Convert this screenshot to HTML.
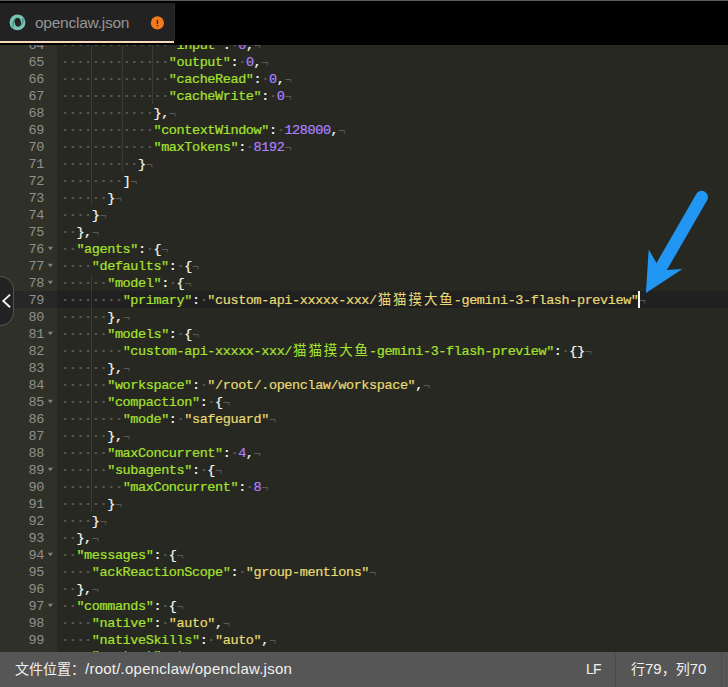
<!DOCTYPE html>
<html lang="zh-CN">
<head>
<meta charset="utf-8">
<title>openclaw.json</title>
<style>
html,body{margin:0;padding:0;}
body{width:728px;height:687px;overflow:hidden;background:#272822;position:relative;font-family:"Liberation Sans","Noto Sans CJK SC",sans-serif;}
#top{position:absolute;left:0;top:0;width:728px;height:45px;background:#000;}
#topline{position:absolute;left:0;top:0;width:728px;height:1px;background:#5c5c5c;}
#tab{position:absolute;left:0;top:3px;width:175px;height:37.6px;background:#222;box-sizing:border-box;border-right:1px solid #2c2c2c;}
#tabline{position:absolute;left:0;top:41px;width:174px;height:2px;background:#fbd9bd;}
#tabicon{position:absolute;left:0;top:0;width:174px;height:38px;}
#tabname{position:absolute;left:35px;top:0.6px;height:38px;line-height:38px;font-size:15.5px;letter-spacing:-0.25px;color:#959595;white-space:nowrap;}

#ed{position:absolute;left:0;top:45px;width:728px;height:607px;overflow:hidden;background:#272822;}
#gutter{position:absolute;left:0;top:0;width:57px;height:607px;background:#2f3129;}
.gc{position:absolute;left:0;width:44px;height:17px;line-height:19px;box-sizing:border-box;text-align:right;color:#8f908a;font-family:"Liberation Mono",monospace;font-size:13.5px;letter-spacing:-0.4px;}
.gc.act{background:#272727;width:57px;box-sizing:border-box;padding-right:13px;}
.ln{position:absolute;left:57px;width:671px;height:17px;line-height:19px;padding-left:4px;box-sizing:border-box;white-space:pre;color:#f8f8f2;font-family:"Liberation Mono","Noto Sans CJK SC",monospace;font-size:13.5px;letter-spacing:-0.4px;}
.ln.act{background:#202020;}
.ln span{display:inline-block;height:17px;vertical-align:top;}
.ln{-webkit-text-stroke:0.2px;}
.i{color:#5a5a54;font-weight:bold;}
.e{color:#5a5a54;font-size:12px;position:relative;top:1.7px;-webkit-text-stroke:0;}
.g{box-shadow:inset -1px 0 0 rgba(255,255,255,0.09);}
.v{color:#a6e22e;}
.s{color:#e6db74;}
.n{color:#ae81ff;}
.b{color:#ae81ff;}
.cjk{width:15.4px;text-align:center;letter-spacing:0;font-size:13.5px;-webkit-text-stroke:0;font-weight:400;}
#cursor{position:absolute;left:638px;top:246px;width:2px;height:17px;background:#f8f8f0;}
#toggle{position:absolute;left:0;top:276px;width:14px;height:50px;background:#222;border:1px solid #50504d;border-left:none;border-radius:0 14px 14px 0;box-sizing:border-box;}
#arrow{position:absolute;left:0;top:0;width:728px;height:687px;pointer-events:none;}
#status{position:absolute;left:0;top:652px;width:728px;height:35px;background:#565656;color:#f0f0f0;font-size:14px;line-height:35px;}
#status .path{position:absolute;left:15px;top:-1.2px;white-space:nowrap;}
#status .la{font-size:15px;letter-spacing:0.24px;}
#status .dg{font-size:15px;}
#status .lf{position:absolute;left:586px;top:-0.5px;letter-spacing:-0.9px;}
#status .pos{position:absolute;left:631px;top:-1.2px;white-space:nowrap;}
#status .sep{position:absolute;top:0;width:1px;height:35px;background:#4c4c4c;}
</style>
</head>
<body>
<div id="top">
  <div id="topline"></div>
  <div id="tab">
    <svg id="tabicon" viewBox="0 0 174 38">
      <circle cx="17.5" cy="19.4" r="7.9" fill="#77c4b7"/>
      <ellipse cx="17.8" cy="19.25" rx="3.1" ry="4.4" transform="rotate(-12 17.8 19.25)" fill="#222"/>
      <path d="M15.6 15.5 Q12 18.9 13.1 23.6" fill="none" stroke="#2a665d" stroke-width="0.9"/>
      <path d="M22.6 15.2 Q24.2 20.6 19.4 23" fill="none" stroke="#2a665d" stroke-width="0.9"/>
      <circle cx="157.4" cy="19.9" r="6.6" fill="#f4791f"/>
      <rect x="156.7" y="16.9" width="1.4" height="4.1" fill="#3a2a1c"/>
      <rect x="156.7" y="22" width="1.4" height="1.3" fill="#3a2a1c"/>
    </svg>
    <div id="tabname">openclaw.json</div>
  </div>
  <div id="tabline"></div>
</div>
<div id="ed">
  <div id="gutter">
<div class="gc" style="top:-9px">64</div>
<div class="gc" style="top:8px">65</div>
<div class="gc" style="top:25px">66</div>
<div class="gc" style="top:42px">67</div>
<div class="gc" style="top:59px">68</div>
<div class="gc" style="top:76px">69</div>
<div class="gc" style="top:93px">70</div>
<div class="gc" style="top:110px">71</div>
<div class="gc" style="top:127px">72</div>
<div class="gc" style="top:144px">73</div>
<div class="gc" style="top:161px">74</div>
<div class="gc" style="top:178px">75</div>
<div class="gc" style="top:195px">76</div>
<div class="gc" style="top:212px">77</div>
<div class="gc" style="top:229px">78</div>
<div class="gc act" style="top:246px">79</div>
<div class="gc" style="top:263px">80</div>
<div class="gc" style="top:280px">81</div>
<div class="gc" style="top:297px">82</div>
<div class="gc" style="top:314px">83</div>
<div class="gc" style="top:331px">84</div>
<div class="gc" style="top:348px">85</div>
<div class="gc" style="top:365px">86</div>
<div class="gc" style="top:382px">87</div>
<div class="gc" style="top:399px">88</div>
<div class="gc" style="top:416px">89</div>
<div class="gc" style="top:433px">90</div>
<div class="gc" style="top:450px">91</div>
<div class="gc" style="top:467px">92</div>
<div class="gc" style="top:484px">93</div>
<div class="gc" style="top:501px">94</div>
<div class="gc" style="top:518px">95</div>
<div class="gc" style="top:535px">96</div>
<div class="gc" style="top:552px">97</div>
<div class="gc" style="top:569px">98</div>
<div class="gc" style="top:586px">99</div>
<div class="gc" style="top:603px">100</div>
  </div>
<div class="ln" style="top:-9px"><span class="i g">····</span><span class="i g">····</span><span class="i g">····</span><span class="i">··</span><span class="v">"input"</span>:<span class="i">·</span><span class="n">0</span>,<span class="e">¬</span></div>
<div class="ln" style="top:8px"><span class="i g">····</span><span class="i g">····</span><span class="i g">····</span><span class="i">··</span><span class="v">"output"</span>:<span class="i">·</span><span class="n">0</span>,<span class="e">¬</span></div>
<div class="ln" style="top:25px"><span class="i g">····</span><span class="i g">····</span><span class="i g">····</span><span class="i">··</span><span class="v">"cacheRead"</span>:<span class="i">·</span><span class="n">0</span>,<span class="e">¬</span></div>
<div class="ln" style="top:42px"><span class="i g">····</span><span class="i g">····</span><span class="i g">····</span><span class="i">··</span><span class="v">"cacheWrite"</span>:<span class="i">·</span><span class="n">0</span><span class="e">¬</span></div>
<div class="ln" style="top:59px"><span class="i g">····</span><span class="i g">····</span><span class="i">····</span>},<span class="e">¬</span></div>
<div class="ln" style="top:76px"><span class="i g">····</span><span class="i g">····</span><span class="i">····</span><span class="v">"contextWindow"</span>:<span class="i">·</span><span class="n">128000</span>,<span class="e">¬</span></div>
<div class="ln" style="top:93px"><span class="i g">····</span><span class="i g">····</span><span class="i">····</span><span class="v">"maxTokens"</span>:<span class="i">·</span><span class="n">8192</span><span class="e">¬</span></div>
<div class="ln" style="top:110px"><span class="i g">····</span><span class="i g">····</span><span class="i">··</span>}<span class="e">¬</span></div>
<div class="ln" style="top:127px"><span class="i g">····</span><span class="i">····</span>]<span class="e">¬</span></div>
<div class="ln" style="top:144px"><span class="i g">····</span><span class="i">··</span>}<span class="e">¬</span></div>
<div class="ln" style="top:161px"><span class="i">····</span>}<span class="e">¬</span></div>
<div class="ln" style="top:178px"><span class="i">··</span>},<span class="e">¬</span></div>
<div class="ln" style="top:195px"><span class="i">··</span><span class="v">"agents"</span>:<span class="i">·</span>{<span class="e">¬</span></div>
<div class="ln" style="top:212px"><span class="i">····</span><span class="v">"defaults"</span>:<span class="i">·</span>{<span class="e">¬</span></div>
<div class="ln" style="top:229px"><span class="i g">····</span><span class="i">··</span><span class="v">"model"</span>:<span class="i">·</span>{<span class="e">¬</span></div>
<div class="ln act" style="top:246px"><span class="i g">····</span><span class="i">····</span><span class="v">"primary"</span>:<span class="i">·</span><span class="s">"custom-api-xxxxx-xxx/<span class="cjk">猫</span><span class="cjk">猫</span><span class="cjk">摸</span><span class="cjk">大</span><span class="cjk">鱼</span>-gemini-3-flash-preview"</span><span class="e">¬</span></div>
<div class="ln" style="top:263px"><span class="i g">····</span><span class="i">··</span>},<span class="e">¬</span></div>
<div class="ln" style="top:280px"><span class="i g">····</span><span class="i">··</span><span class="v">"models"</span>:<span class="i">·</span>{<span class="e">¬</span></div>
<div class="ln" style="top:297px"><span class="i g">····</span><span class="i">····</span><span class="v">"custom-api-xxxxx-xxx/<span class="cjk">猫</span><span class="cjk">猫</span><span class="cjk">摸</span><span class="cjk">大</span><span class="cjk">鱼</span>-gemini-3-flash-preview"</span>:<span class="i">·</span>{}<span class="e">¬</span></div>
<div class="ln" style="top:314px"><span class="i g">····</span><span class="i">··</span>},<span class="e">¬</span></div>
<div class="ln" style="top:331px"><span class="i g">····</span><span class="i">··</span><span class="v">"workspace"</span>:<span class="i">·</span><span class="s">"/root/.openclaw/workspace"</span>,<span class="e">¬</span></div>
<div class="ln" style="top:348px"><span class="i g">····</span><span class="i">··</span><span class="v">"compaction"</span>:<span class="i">·</span>{<span class="e">¬</span></div>
<div class="ln" style="top:365px"><span class="i g">····</span><span class="i">····</span><span class="v">"mode"</span>:<span class="i">·</span><span class="s">"safeguard"</span><span class="e">¬</span></div>
<div class="ln" style="top:382px"><span class="i g">····</span><span class="i">··</span>},<span class="e">¬</span></div>
<div class="ln" style="top:399px"><span class="i g">····</span><span class="i">··</span><span class="v">"maxConcurrent"</span>:<span class="i">·</span><span class="n">4</span>,<span class="e">¬</span></div>
<div class="ln" style="top:416px"><span class="i g">····</span><span class="i">··</span><span class="v">"subagents"</span>:<span class="i">·</span>{<span class="e">¬</span></div>
<div class="ln" style="top:433px"><span class="i g">····</span><span class="i">····</span><span class="v">"maxConcurrent"</span>:<span class="i">·</span><span class="n">8</span><span class="e">¬</span></div>
<div class="ln" style="top:450px"><span class="i g">····</span><span class="i">··</span>}<span class="e">¬</span></div>
<div class="ln" style="top:467px"><span class="i">····</span>}<span class="e">¬</span></div>
<div class="ln" style="top:484px"><span class="i">··</span>},<span class="e">¬</span></div>
<div class="ln" style="top:501px"><span class="i">··</span><span class="v">"messages"</span>:<span class="i">·</span>{<span class="e">¬</span></div>
<div class="ln" style="top:518px"><span class="i">····</span><span class="v">"ackReactionScope"</span>:<span class="i">·</span><span class="s">"group-mentions"</span><span class="e">¬</span></div>
<div class="ln" style="top:535px"><span class="i">··</span>},<span class="e">¬</span></div>
<div class="ln" style="top:552px"><span class="i">··</span><span class="v">"commands"</span>:<span class="i">·</span>{<span class="e">¬</span></div>
<div class="ln" style="top:569px"><span class="i">····</span><span class="v">"native"</span>:<span class="i">·</span><span class="s">"auto"</span>,<span class="e">¬</span></div>
<div class="ln" style="top:586px"><span class="i">····</span><span class="v">"nativeSkills"</span>:<span class="i">·</span><span class="s">"auto"</span>,<span class="e">¬</span></div>
<div class="ln" style="top:602.3px"><span class="i">····</span><span class="v">"restart"</span>:<span class="i">·</span><span class="b">true</span><span class="e">¬</span></div>
  <div id="cursor"></div>
</div>
<div id="toggle"></div>
<svg id="arrow" viewBox="0 0 728 687">
  <g fill="#7e7f79"><polygon points="47.6,246.8 53.2,246.8 50.4,250.3"/><polygon points="47.6,263.8 53.2,263.8 50.4,267.3"/><polygon points="47.6,280.8 53.2,280.8 50.4,284.3"/><polygon points="47.6,331.8 53.2,331.8 50.4,335.3"/><polygon points="47.6,399.8 53.2,399.8 50.4,403.3"/><polygon points="47.6,467.8 53.2,467.8 50.4,471.3"/><polygon points="47.6,552.8 53.2,552.8 50.4,556.3"/><polygon points="47.6,603.8 53.2,603.8 50.4,607.3"/></g>
  <polyline points="10.1,294.6 3.3,300.9 10.1,307.2" fill="none" stroke="#f4f4f4" stroke-width="1.9"/>
  <line x1="701.7" y1="197.1" x2="662" y2="266" stroke="#2196f3" stroke-width="12.5" stroke-linecap="round"/>
  <polygon points="645.9,292.9 648.7,249.5 656.8,263.6 666.4,270 682.5,268.9" fill="#2196f3"/>
</svg>
<div id="status">
  <div class="path">文件位置：<span class="la">/root/.openclaw/openclaw.json</span></div>
  <div class="sep" style="left:615px"></div>
  <div class="lf">LF</div>
  <div class="pos">行<span class="dg">79</span>，列<span class="dg">70</span></div>
  <div class="sep" style="left:721px"></div>
</div>
</body>
</html>
